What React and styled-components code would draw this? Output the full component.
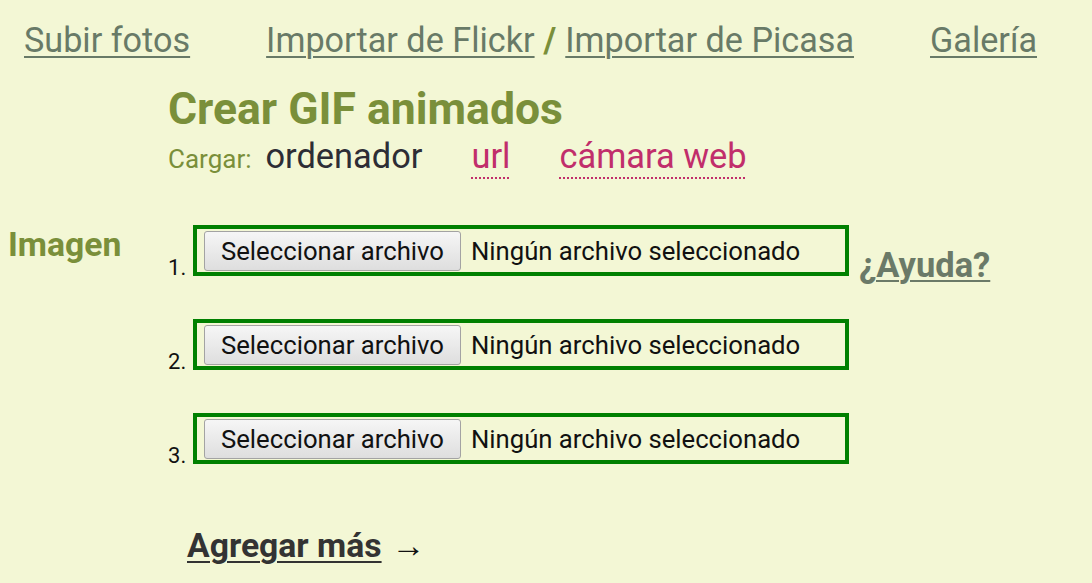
import React from 'react'
import styled, { createGlobalStyle } from 'styled-components'

const GlobalStyle = createGlobalStyle`
  html, body {
    margin: 0;
    padding: 0;
    background: #f3f7d5;
    font-family: Roboto, "Liberation Sans", Arial, sans-serif;
  }
`

const Page = styled.div`
  width: 1092px;
  height: 583px;
  overflow: hidden;
`

const Nav = styled.nav`
  display: flex;
  align-items: baseline;
  gap: 76px;
  padding: 20px 0 0 24px;
  font-size: 34.2px;
  line-height: 40px;
`

const NavGroup = styled.span`
  display: inline-flex;
  align-items: baseline;
  gap: 9px;
`

const NavLink = styled.a`
  color: #687a67;
  text-decoration: underline;
  text-decoration-thickness: 2px;
  text-underline-offset: 4px;
`

const Slash = styled.span`
  color: #7a8f3a;
  font-weight: 700;
`

const Intro = styled.div`
  padding: 23px 0 0 168px;
`

const Title = styled.h1`
  margin: 0;
  font-size: 44.5px;
  line-height: 53px;
  font-weight: 700;
  color: #7a8f3a;
`

const LoadRow = styled.div`
  display: flex;
  align-items: baseline;
  height: 40px;
  line-height: 40px;
`

const LoadLabel = styled.span`
  font-size: 26px;
  color: #7a8f3a;
  margin-right: 14px;
`

const Source = styled.span`
  font-size: 34.4px;
  color: ${(p) => (p.$active ? '#2d2d35' : '#c12e6b')};
  margin-right: ${(p) => p.$gap || 0}px;
  ${(p) =>
    !p.$active &&
    `
    text-decoration: underline dotted #c12e6b;
    text-decoration-thickness: 2px;
    text-underline-offset: 9px;
  `}
`

const Form = styled.div`
  display: flex;
  padding: 49px 0 0 8px;
`

const FieldLabel = styled.div`
  width: 160px;
  font-size: 33.7px;
  font-weight: 700;
  color: #7a8f3a;
  line-height: 40px;
`

const Rows = styled.div`
  display: flex;
  flex-direction: column;
  gap: 43px;
`

const Row = styled.div`
  display: flex;
  align-items: flex-end;
`

const Num = styled.span`
  width: 25px;
  font-size: 22px;
  line-height: 22px;
  color: #111;
  margin-bottom: -3px;
`

const FileBox = styled.div`
  box-sizing: border-box;
  width: 656px;
  height: 51px;
  border: 4px solid #008000;
  display: flex;
  align-items: center;
  padding: 0 7px;
  gap: 10px;
`

const FileButton = styled.button`
  box-sizing: border-box;
  height: 40px;
  padding: 0 16px;
  font-family: inherit;
  font-size: 25.7px;
  color: #111;
  background: linear-gradient(#f6f6f6, #dedede);
  border: 1px solid #a3a3a3;
  border-radius: 3px;
`

const FileStatus = styled.span`
  font-size: 25.7px;
  color: #111;
`

const Help = styled.a`
  margin: 0 0 -9px 10px;
  font-size: 34.5px;
  font-weight: 700;
  color: #6b7a68;
  text-decoration: underline;
  text-decoration-thickness: 2px;
  text-underline-offset: 3px;
`

const More = styled.div`
  padding: 62px 0 0 187px;
  font-size: 33.7px;
  color: #111;
`

const MoreLink = styled.a`
  font-weight: 700;
  color: #333;
  text-decoration: underline;
  text-decoration-thickness: 2px;
  text-underline-offset: 4px;
  margin-right: 10px;
`

export default function App() {
  const files = [1, 2, 3]
  return (
    <Page>
      <GlobalStyle />
      <Nav>
        <NavLink>Subir fotos</NavLink>
        <NavGroup>
          <NavLink>Importar de Flickr</NavLink>
          <Slash>/</Slash>
          <NavLink>Importar de Picasa</NavLink>
        </NavGroup>
        <NavLink>Galería</NavLink>
      </Nav>
      <Intro>
        <Title>Crear GIF animados</Title>
        <LoadRow>
          <LoadLabel>Cargar:</LoadLabel>
          <Source $active $gap={49}>ordenador</Source>
          <Source $gap={49}>url</Source>
          <Source>cámara web</Source>
        </LoadRow>
      </Intro>
      <Form>
        <FieldLabel>Imagen</FieldLabel>
        <Rows>
          {files.map((n) => (
            <Row key={n}>
              <Num>{n}.</Num>
              <FileBox>
                <FileButton>Seleccionar archivo</FileButton>
                <FileStatus>Ningún archivo seleccionado</FileStatus>
              </FileBox>
              {n === 1 && <Help>¿Ayuda?</Help>}
            </Row>
          ))}
        </Rows>
      </Form>
      <More>
        <MoreLink>Agregar más</MoreLink>→
      </More>
    </Page>
  )
}
